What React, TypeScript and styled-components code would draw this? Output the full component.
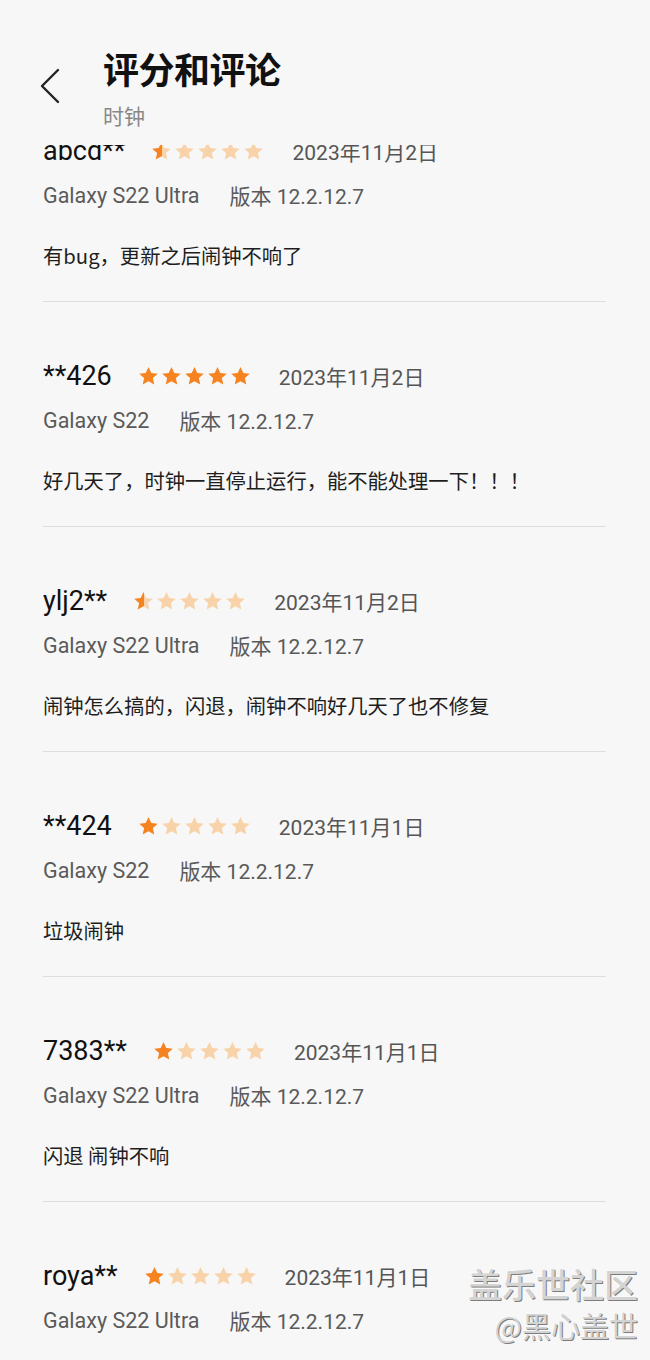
import React from "react";
import styled, { createGlobalStyle } from "styled-components";

const Global = createGlobalStyle`
  html, body { margin: 0; padding: 0; background: #f7f7f7; }
  body { font-family: Roboto, "Noto Sans CJK SC", sans-serif; -webkit-font-smoothing: antialiased; }
`;

const Page = styled.div`
  position: relative;
  width: 650px;
  height: 1360px;
  overflow: hidden;
  background: #f7f7f7;
  display: flex;
  flex-direction: column;
`;

const Header = styled.header`
  display: flex;
  align-items: flex-start;
  height: 145px;
  box-sizing: border-box;
  padding: 46px 0 0 38px;
  flex-shrink: 0;
`;

const BackButton = styled.div`
  width: 24px;
  height: 36px;
  margin-top: 22px;
  margin-right: 41px;
  display: flex;
  align-items: center;
  justify-content: center;
`;

const TitleBlock = styled.div`
  display: flex;
  flex-direction: column;
`;

const Title = styled.h1`
  margin: 0;
  font-family: "Noto Sans CJK SC", sans-serif;
  font-size: 36px;
  line-height: 44px;
  font-weight: 700;
  color: #111;
  letter-spacing: -0.5px;
`;

const Subtitle = styled.div`
  margin-top: 11px;
  font-family: "Noto Sans CJK SC", sans-serif;
  font-size: 21px;
  line-height: 28px;
  color: #888;
`;

const Viewport = styled.div`
  flex: 1;
  overflow: hidden;
`;

const List = styled.div`
  margin-top: -10px;
`;

const Review = styled.div<{ $first?: boolean }>`
  margin: 0 44px 0 43px;
  padding: ${(p) => (p.$first ? "0" : "58px")} 0 32px;
  border-bottom: 1px solid #dedede;
  display: flex;
  flex-direction: column;
`;

const TopRow = styled.div`
  display: flex;
  align-items: center;
  height: 32px;
  gap: 26px;
`;

const Name = styled.span`
  font-size: 27px;
  color: #111;
  line-height: 32px;
`;

const Stars = styled.div`
  display: flex;
  gap: 2px;
  align-items: center;
`;

const DateText = styled.span`
  margin-left: 2px;
  font-size: 21px;
  color: #555;
`;

const MetaRow = styled.div`
  display: flex;
  align-items: center;
  gap: 30px;
  margin-top: 14px;
  height: 28px;
  font-size: 21.5px;
  color: #5a5a5a;
`;

const Version = styled.span`
  font-size: 21px;
`;

const Body = styled.p`
  margin: 32px 0 0;
  font-family: "Noto Sans CJK SC", sans-serif;
  font-size: 20.3px;
  line-height: 28px;
  color: #1e1e1e;
`;

const Watermark = styled.div`
  position: absolute;
  right: 12px;
  bottom: 18px;
  display: flex;
  flex-direction: column;
  align-items: flex-end;
  font-family: "Noto Sans CJK SC", sans-serif;
  color: #d4d4d4;
  text-shadow: 1px 1px 0 #7d7d7d, -1px -1px 0 #fafafa;
`;

const WmMain = styled.div`
  font-size: 34px;
  line-height: 40px;
  font-weight: 500;
`;

const WmSub = styled.div`
  margin-top: 4px;
  font-size: 29px;
  line-height: 34px;
`;

const STAR = "M12 1.2l3.2 6.8 7.4.8-5.6 5 1.6 7.3L12 17.5 5.4 21.1 7 13.8 1.4 8.8l7.4-.8z";
const FULL = "#f5831f";
const LIGHT = "#f8d3a9";

function Star({ fill, id }: { fill: number; id: string }) {
  return (
    <svg width="21" height="21" viewBox="0 0 24 24">
      <defs>
        <linearGradient id={id} x1="0" x2="1" y1="0" y2="0">
          <stop offset={fill} stopColor={FULL} />
          <stop offset={fill} stopColor={LIGHT} />
        </linearGradient>
      </defs>
      <path d={STAR} fill={`url(#${id})`} />
    </svg>
  );
}

function Rating({ value, idx }: { value: number; idx: number }) {
  return (
    <Stars>
      {[0, 1, 2, 3, 4].map((i) => {
        const f = Math.max(0, Math.min(1, value - i));
        return <Star key={i} fill={f} id={`s${idx}-${i}`} />;
      })}
    </Stars>
  );
}

const reviews = [
  { name: "abcd**", rating: 0.5, date: "2023年11月2日", device: "Galaxy S22 Ultra", body: "有bug，更新之后闹钟不响了" },
  { name: "**426", rating: 5, date: "2023年11月2日", device: "Galaxy S22", body: "好几天了，时钟一直停止运行，能不能处理一下！！！" },
  { name: "ylj2**", rating: 0.5, date: "2023年11月2日", device: "Galaxy S22 Ultra", body: "闹钟怎么搞的，闪退，闹钟不响好几天了也不修复" },
  { name: "**424", rating: 1, date: "2023年11月1日", device: "Galaxy S22", body: "垃圾闹钟" },
  { name: "7383**", rating: 1, date: "2023年11月1日", device: "Galaxy S22 Ultra", body: "闪退 闹钟不响" },
  { name: "roya**", rating: 1, date: "2023年11月1日", device: "Galaxy S22 Ultra", body: "" },
];

export default function App() {
  return (
    <>
      <Global />
      <Page>
        <Header>
          <BackButton>
            <svg width="22" height="36" viewBox="0 0 22 36">
              <polyline points="19,2 3,18 19,34" fill="none" stroke="#222" strokeWidth="2.4" strokeLinecap="round" strokeLinejoin="round" />
            </svg>
          </BackButton>
          <TitleBlock>
            <Title>评分和评论</Title>
            <Subtitle>时钟</Subtitle>
          </TitleBlock>
        </Header>
        <Viewport>
          <List>
            {reviews.map((r, i) => (
              <Review key={i} $first={i === 0}>
                <TopRow>
                  <Name>{r.name}</Name>
                  <Rating value={r.rating} idx={i} />
                  <DateText>{r.date}</DateText>
                </TopRow>
                <MetaRow>
                  <span>{r.device}</span>
                  <Version>版本 12.2.12.7</Version>
                </MetaRow>
                {r.body && <Body>{r.body}</Body>}
              </Review>
            ))}
          </List>
        </Viewport>
        <Watermark>
          <WmMain>盖乐世社区</WmMain>
          <WmSub>@黑心盖世</WmSub>
        </Watermark>
      </Page>
    </>
  );
}
